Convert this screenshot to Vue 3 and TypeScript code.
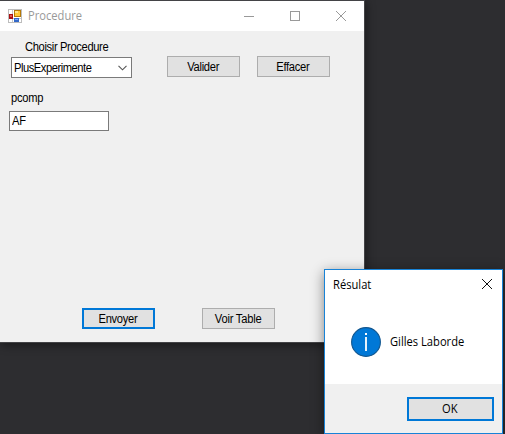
<script setup lang="ts">
import { ref } from 'vue'

const procedure = ref('PlusExperimente')
const pcomp = ref('AF')
const employee = 'Gilles Laborde'
</script>

<template>
  <main class="desktop">
    <section class="window">
      <header class="titlebar">
        <svg class="app-icon" width="14" height="14" viewBox="0 0 14 14" shape-rendering="crispEdges">
          <rect x="0.5" y="0.5" width="13" height="13" fill="#fff" stroke="#bdbdbd" />
          <path d="M4.5 1v12M1 9.5h12" stroke="#c8c8c8" />
          <rect x="1" y="5" width="4" height="5" fill="#a80f12" />
          <rect x="2" y="6" width="2" height="2" fill="#e25a50" />
          <rect x="6" y="1" width="7" height="7" fill="#b57908" />
          <rect x="7" y="2" width="5" height="5" fill="#ffc935" />
          <rect x="7" y="2" width="3" height="2" fill="#ffe48a" />
          <rect x="6" y="9" width="5" height="4" fill="#3469c9" />
          <rect x="7" y="10" width="3" height="1" fill="#7ba9f5" />
        </svg>
        <span class="title seg">Procedure</span>
        <div class="controls">
          <svg width="10" height="10" viewBox="0 0 10 10"><path d="M0 5.5h10" stroke="#999" /></svg>
          <svg width="10" height="10" viewBox="0 0 10 10"><rect x=".5" y=".5" width="9" height="9" fill="none" stroke="#999" /></svg>
          <svg width="10" height="10" viewBox="0 0 10 10"><path d="M0 0l10 10M10 0L0 10" stroke="#999" /></svg>
        </div>
      </header>
      <div class="form">
        <div class="top-row">
          <div class="fields">
            <div class="label choose"><span class="t-choose">Choisir Procedure</span></div>
            <div class="combo">
              <span class="t-combo">{{ procedure }}</span>
              <svg width="9" height="6" viewBox="0 0 9 6"><path d="M.5 .8l4 4 4-4" fill="none" stroke="#555" stroke-width="1.1" /></svg>
            </div>
            <div class="label param"><span class="t-param">pcomp</span></div>
            <div class="textbox"><span class="t-box">{{ pcomp }}</span></div>
          </div>
          <div class="actions">
            <button class="btn"><span class="t-valider">Valider</span></button>
            <button class="btn"><span class="t-effacer">Effacer</span></button>
          </div>
        </div>
        <div class="bottom-row">
          <button class="btn primary"><span class="t-envoyer">Envoyer</span></button>
          <button class="btn"><span class="t-voir">Voir Table</span></button>
        </div>
      </div>
    </section>

    <section class="dialog">
      <header class="dialog-head">
        <span class="seg t-result">Résulat</span>
        <svg width="10" height="10" viewBox="0 0 10 10"><path d="M0 0l10 10M10 0L0 10" stroke="#111" /></svg>
      </header>
      <div class="message">
        <svg width="30" height="30" viewBox="0 0 30 30">
          <circle cx="15" cy="15" r="14.4" fill="#0078d7" stroke="#13578f" stroke-width="1.1" />
          <rect x="14" y="6" width="2" height="2" fill="#fff" />
          <rect x="14.1" y="10" width="1.8" height="14" fill="#fff" />
        </svg>
        <span class="seg t-name">{{ employee }}</span>
      </div>
      <footer class="dialog-foot">
        <button class="btn primary ok"><span class="seg">OK</span></button>
      </footer>
    </section>
  </main>
</template>

<style>
body { margin: 0; overflow: hidden; }
</style>

<style scoped>
* { box-sizing: border-box; }
.desktop {
  position: relative;
  width: 505px;
  height: 434px;
  overflow: hidden;
  background: #2d2d30;
  color: #000;
  font: 12px/14px "Liberation Sans", Arial, sans-serif;
}
span { display: inline-block; white-space: nowrap; }
.seg { font-family: "Open Sans", "Noto Sans", sans-serif; transform: scaleX(.93); transform-origin: left; }
.window {
  position: absolute;
  left: 0;
  top: 0;
  width: 365px;
  height: 343px;
  display: flex;
  flex-direction: column;
  border: solid #434346;
  border-width: 1px 1px 1px 0;
  background: #f0f0f0;
  box-shadow: 1px 2px 9px rgba(0, 0, 0, .45);
}
.titlebar {
  display: flex;
  align-items: center;
  height: 30px;
  padding: 0 18px 0 8px;
  background: #fff;
}
.title { margin-left: 6px; color: #999; }
.controls { display: flex; gap: 36px; margin-left: auto; }
svg { display: block; flex: none; }
.form { flex: 1; display: flex; flex-direction: column; justify-content: space-between; }
.top-row { display: flex; }
.fields { width: 167px; padding: 9px 0 0 9px; }
.label { height: 14px; }
.choose { padding-left: 16px; }
.param { margin-top: 13px; padding-left: 2px; }
.combo {
  display: flex;
  align-items: center;
  justify-content: space-between;
  width: 121px;
  height: 21px;
  margin: 3px 0 0 2px;
  padding: 0 4px 0 2px;
  border: 1px solid #7a7a7a;
  background: #fff;
}
.combo svg { margin-top: 1px; }
.textbox {
  display: flex;
  align-items: center;
  width: 100px;
  height: 20px;
  margin-top: 6px;
  padding-left: 2px;
  border: 1px solid #7a7a7a;
  background: #fff;
}
.actions { display: flex; gap: 17px; padding-top: 25px; }
.btn {
  display: flex;
  align-items: center;
  justify-content: center;
  width: 73px;
  height: 21px;
  padding: 0 1px 0 0;
  border: 1px solid #adadad;
  border-radius: 0;
  background: #e1e1e1;
  color: #000;
  font: inherit;
}
.primary { border: 2px solid #0078d7; }
.bottom-row { display: flex; gap: 47px; padding: 0 0 13px 82px; }
.t-choose, .t-combo, .t-param, .t-box { transform-origin: left; }
.t-choose, .t-combo, .t-param, .t-box, .btn span { transform: scaleX(.93); }
.t-choose { letter-spacing: -.38px; }
.t-combo { letter-spacing: -.5px; }
.t-param { letter-spacing: -.25px; }
.t-valider, .t-effacer, .t-envoyer { letter-spacing: -.3px; }
.t-voir { letter-spacing: -.22px; }
.t-box { letter-spacing: -.2px; }
.dialog {
  position: absolute;
  left: 324px;
  top: 269px;
  width: 179px;
  height: 165px;
  display: flex;
  flex-direction: column;
  border: 1px solid #1883d7;
  background: #fff;
  box-shadow: 0 3px 12px rgba(0, 0, 0, .45);
}
.dialog-head {
  display: flex;
  align-items: center;
  justify-content: space-between;
  height: 30px;
  padding: 0 10px 0 8px;
}
.dialog-head svg { margin-top: -2px; }
.message { display: flex; align-items: center; gap: 9px; height: 84px; padding-left: 26px; }
.dialog-foot {
  flex: 1;
  display: flex;
  justify-content: flex-end;
  padding: 13px 8px 0 0;
  background: #f0f0f0;
}
.ok { width: 87px; height: 24px; }
</style>
